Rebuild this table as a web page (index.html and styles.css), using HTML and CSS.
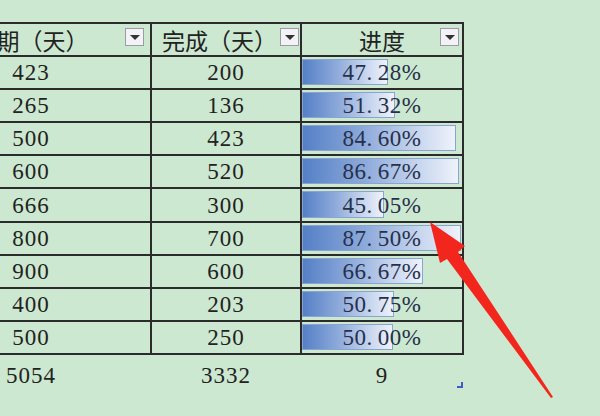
FILE: index.html
```html
<!DOCTYPE html>
<html lang="zh">
<head>
<meta charset="utf-8">
<link rel="stylesheet" href="styles.css">
</head>
<body>
<div class="sheet">
  <table class="grid">
    <colgroup><col class="c1"><col class="c2"><col class="c3"></colgroup>
    <thead>
      <tr>
        <th class="h1">工期（天）<span class="filter f1"></span></th>
        <th class="h2">完成（天）<span class="filter f2"></span></th>
        <th class="h3">进度<span class="filter f3"></span></th>
      </tr>
    </thead>
    <tbody>
      <tr><td class="n1">423</td><td>200</td><td class="pct"><span class="bar" style="width:86px"></span><span class="txt">47<span class="dot">.</span>28%</span></td></tr>
      <tr><td class="n1">265</td><td>136</td><td class="pct"><span class="bar" style="width:93px"></span><span class="txt">51<span class="dot">.</span>32%</span></td></tr>
      <tr><td class="n1">500</td><td>423</td><td class="pct"><span class="bar" style="width:154px"></span><span class="txt">84<span class="dot">.</span>60%</span></td></tr>
      <tr><td class="n1">600</td><td>520</td><td class="pct"><span class="bar" style="width:157px"></span><span class="txt">86<span class="dot">.</span>67%</span></td></tr>
      <tr><td class="n1">666</td><td>300</td><td class="pct"><span class="bar" style="width:82px"></span><span class="txt">45<span class="dot">.</span>05%</span></td></tr>
      <tr><td class="n1">800</td><td>700</td><td class="pct"><span class="bar" style="width:159px"></span><span class="txt">87<span class="dot">.</span>50%</span></td></tr>
      <tr><td class="n1">900</td><td>600</td><td class="pct"><span class="bar" style="width:121px"></span><span class="txt">66<span class="dot">.</span>67%</span></td></tr>
      <tr><td class="n1">400</td><td>203</td><td class="pct"><span class="bar" style="width:92px"></span><span class="txt">50<span class="dot">.</span>75%</span></td></tr>
      <tr><td class="n1">500</td><td>250</td><td class="pct"><span class="bar" style="width:91px"></span><span class="txt">50<span class="dot">.</span>00%</span></td></tr>
      <tr class="total"><td class="n1">5054</td><td>3332</td><td class="tot3">9<span class="mark"></span></td></tr>
    </tbody>
  </table>
  <svg class="arrow" width="600" height="416" viewBox="0 0 600 416">
    <polygon points="430,222 465,246 458,252 553,397 551,398 447,259 440,263" fill="#f2261c"/>
  </svg>
</div>
</body>
</html>
```
FILE: styles.css
```css
html, body {
  margin: 0;
  padding: 0;
}
body {
  width: 600px;
  height: 416px;
  overflow: hidden;
  background: #cde8d0;
}
.sheet {
  position: relative;
  width: 600px;
  height: 416px;
  padding-top: 22px;
  box-sizing: border-box;
}
.grid {
  border-collapse: collapse;
  table-layout: fixed;
  width: 552px;
  margin-left: -90px;
  font-family: "Liberation Serif", "Noto Sans CJK SC", serif;
  color: #222;
}
.c1 { width: 240px; }
.c2 { width: 150px; }
.c3 { width: 162px; }
.grid th, .grid td {
  border: 2px solid #2b2b2b;
  padding: 0;
  height: 31.1px;
  text-align: center;
  vertical-align: middle;
  position: relative;
}
.grid th {
  font-family: "Noto Sans CJK SC", sans-serif;
  font-weight: 400;
  font-size: 23px;
  line-height: 29px;
  color: #222;
  white-space: nowrap;
  overflow: visible;
  padding-top: 2px;
  height: 29.1px;
}
.grid th.h2 {
  text-align: left;
  padding-left: 10px;
}
.grid td {
  font-size: 23px;
  letter-spacing: 1px;
  line-height: 31px;
}
.filter {
  position: absolute;
  top: 4px;
  width: 17px;
  height: 16px;
  background: #f3f2f6;
  border: 1px solid #9c9ca6;
  box-sizing: content-box;
}
.filter::after {
  content: "";
  position: absolute;
  left: 4px;
  top: 6px;
  border-left: 5px solid transparent;
  border-right: 5px solid transparent;
  border-top: 5px solid #333;
}
.f1 { right: 6px; }
.f2 { right: 1px; }
.f3 { right: 3px; }
.pct {
  color: #26304a;
}
.bar {
  position: absolute;
  left: 0;
  top: 2px;
  bottom: 3px;
  border: 1px solid #8aa4d0;
  box-sizing: border-box;
  background: linear-gradient(to right, #5580c6 0%, #8eaadb 40%, #c8d6ee 75%, #eef2fb 100%);
}
.txt {
  position: relative;
  letter-spacing: 0.5px;
}
.dot {
  margin-right: 5px;
}
.total td {
  border: none;
  border-top: 2px solid #2b2b2b;
  height: 33px;
  padding-top: 5px;
  vertical-align: top;
}
.mark {
  position: absolute;
  left: 156px;
  top: 27px;
  width: 4px;
  height: 4px;
  border-right: 2px solid #3f5bc4;
  border-bottom: 2px solid #3f5bc4;
}
.arrow {
  position: absolute;
  left: 0;
  top: 0;
  pointer-events: none;
}
```
